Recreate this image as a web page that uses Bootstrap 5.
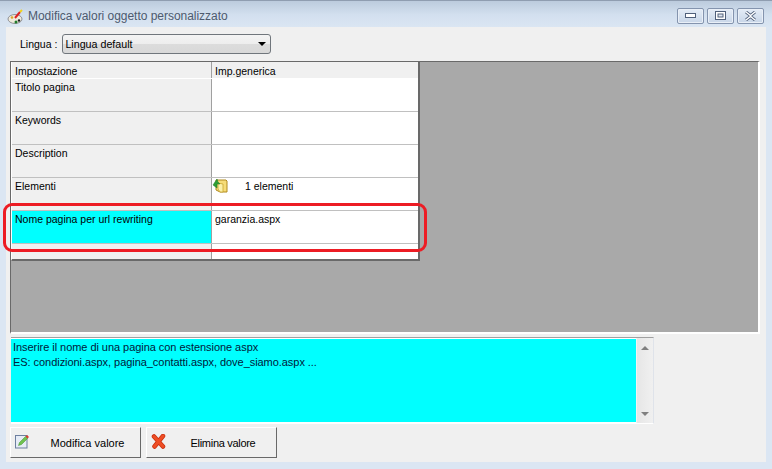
<!DOCTYPE html>
<html lang="it"><head><meta charset="utf-8"><title>Modifica valori oggetto personalizzato</title>
<link href="https://cdn.jsdelivr.net/npm/bootstrap@5.3.0/dist/css/bootstrap.min.css" rel="stylesheet">
<style>
html,body{margin:0;height:469px;overflow:hidden;background:#dbe6f3}
body{font-family:"Liberation Sans",Arial,sans-serif;font-size:10.5px;line-height:13px;color:#000}
.win{width:772px;height:469px;background:linear-gradient(#bccbdd 0,#d3e0ef 14px,#dbe6f3 27px);border-top:1px solid #8f9db0;padding:0 6px 7px 6px;position:relative}
.tbar{height:26px;padding-left:1px}
.tleft{margin-top:5px}
.ttext{font-size:12px;color:#4d5a6e;margin-left:4px;letter-spacing:-.03px}
.wbtns{gap:3px;margin-right:2px;margin-top:3px}
.wbtn{width:27px;height:16px;border:1px solid #8494ae;border-radius:2px;background:linear-gradient(#e4ecf6,#c8d6e8);box-shadow:inset 0 0 0 1px #e9eff7}
.client{height:435px;background:#f0f0f0;padding:0 0 0 4px}
.langrow{height:34px;padding-left:10px;gap:5px}
.lang{width:209px;height:20px;border:1px solid #70767c;border-radius:3px;background:linear-gradient(#f4f4f4 0,#ededed 50%,#dcdcdc 51%,#d8d8d8);padding:0 4px 0 2px;font-size:10.7px}
.caret{width:0;height:0;border-left:4px solid transparent;border-right:4px solid transparent;border-top:4px solid #000}
.gridwrap{width:747px;height:270px;background:#a9a9a9;border-top:1px solid #696969;border-left:1px solid #696969;border-right:2px solid #fff;border-bottom:2px solid #fff;box-sizing:content-box}
.tbl{width:409px;border-right:2px solid #696969;border-bottom:2px solid #696969;background:#fff;border-left:1px solid #fff}
.trow{display:flex;border-bottom:1px solid #c0c0c0;height:33px}
.trow.head{height:17px;background:#f0f0f0;border-bottom:1px solid #fff}
.trow.head .c1,.trow.head .c2{padding-top:3px}
.trow.last{height:15px;border-bottom:0}
.c1{width:200px;background:#f0f0f0;border-right:1px solid #a0a0a0;padding:2px 3px;flex:none}
.c2{flex:1;background:#fff;padding:2px 3px}
.head .c2{background:#f0f0f0}
.cy{background:#0ff}
.lower{margin-top:3px}
.memo{width:643px;height:87px;margin-left:1px;border:1px solid #fff;border-top:1px solid #a0a0a0;border-right:1px solid #dfe3ea;display:flex;background:#f3f3f3;border-left:0}
.memotext{flex:1;background:#0ff;color:#00203a;padding:1px 1px 1px 2px;line-height:15px;border-top:1px solid #fff;border-bottom:1px solid #fff;font-size:11px;letter-spacing:-.05px}
.sbar{width:16px;margin-left:1px;background:linear-gradient(90deg,#e6e6e6,#f0f0f0);padding:8px 0 7px}
.up{border-left:4px solid transparent;border-right:4px solid transparent;border-bottom:4px solid #808080;margin:0 auto;width:0}
.dn{border-left:4px solid transparent;border-right:4px solid transparent;border-top:4px solid #808080;margin:0 auto;width:0}
.bts{gap:5px;margin-top:3px}
.xbtn{width:131px;height:31px;background:#f0f0f0;border:1px solid;border-color:#fff #696969 #696969 #fff;padding:0 0 0 4px;font-size:11px}
.xbtn span{flex:1;text-align:center;padding-left:5px;padding-top:2px}
.xbtn svg{margin-top:-3px}
.xbtn span.tight{letter-spacing:-.3px;padding-left:4px}
.elem{margin-top:2px}
.redbox{position:absolute;left:3px;top:202px;width:424px;height:49px;border:3px solid #ed1c24;border-radius:9px}
</style></head><body>
<div class="win">
 <div class="tbar d-flex align-items-center justify-content-between">
  <div class="d-flex align-items-center tleft">
   <svg width="17" height="16" viewBox="0 0 17 16"><ellipse cx="8" cy="10" rx="7" ry="4.500" fill="#efeadb" stroke="#7a7a80" stroke-width=".8"/><circle cx="5" cy="8.500" r="1.300" fill="#d9a72a"/><circle cx="9" cy="13" r="1.500" fill="#1f7a2a"/><circle cx="12" cy="11.500" r="1.200" fill="#222"/><path d="M8 9 13 3" stroke="#d22" stroke-width="2"/><path d="M13 3 15 1" stroke="#f2d21a" stroke-width="2"/></svg>
   <span class="ttext">Modifica valori oggetto personalizzato</span>
  </div>
  <div class="d-flex wbtns">
   <div class="wbtn d-flex align-items-center justify-content-center"><svg width="11" height="6"><rect x=".5" y=".5" width="10" height="4" fill="#fff" stroke="#50607a"/></svg></div>
   <div class="wbtn d-flex align-items-center justify-content-center"><svg width="11" height="9"><rect x=".5" y=".5" width="10" height="8" fill="#fff" stroke="#50607a"/><rect x="3" y="3" width="5" height="3" fill="#dfe6f0" stroke="#50607a"/></svg></div>
   <div class="wbtn d-flex align-items-center justify-content-center"><svg width="13" height="10"><path d="M2 1l4.500 3.500L11 1M2 9l4.500-3.500L11 9" fill="none" stroke="#50607a" stroke-width="3"/><path d="M2 1l4.500 3.500L11 1M2 9l4.500-3.500L11 9" fill="none" stroke="#fff" stroke-width="1.400"/></svg></div>
  </div>
 </div>
 <div class="client">
  <div class="langrow d-flex align-items-center">
   <span>Lingua :</span>
   <div class="lang d-flex align-items-center justify-content-between"><span>Lingua default</span><i class="caret"></i></div>
  </div>
  <div class="gridwrap">
   <div class="tbl">
    <div class="trow head"><div class="c1">Impostazione</div><div class="c2">Imp.generica</div></div>
    <div class="trow"><div class="c1">Titolo pagina</div><div class="c2"></div></div>
    <div class="trow"><div class="c1">Keywords</div><div class="c2"></div></div>
    <div class="trow"><div class="c1">Description</div><div class="c2"></div></div>
    <div class="trow"><div class="c1">Elementi</div><div class="c2 d-flex align-items-start gap-3 ps-0 pt-0">
     <svg width="17" height="16" viewBox="0 0 17 16"><path d="M4 2h10l1 1v11H8L4 12z" fill="#f6dc78" stroke="#b08a1e"/><path d="M6 5l5 1v8H8L6 11z" fill="#fbf0a8" stroke="#c9a52e" stroke-width=".8"/><path d="M1 7l4-6 1 3 2 2-3 0 0 4z" fill="#2f9e35" stroke="#1c7a22" stroke-width=".5"/></svg>
     <span class="elem">1 elementi</span></div></div>
    <div class="trow"><div class="c1 cy">Nome pagina per url rewriting</div><div class="c2">garanzia.aspx</div></div>
    <div class="trow last"><div class="c1"></div><div class="c2"></div></div>
   </div>
  </div>
  <div class="lower">
   <div class="memo"><div class="memotext">Inserire il nome di una pagina con estensione aspx<br>ES: condizioni.aspx, pagina_contatti.aspx, dove_siamo.aspx ...</div>
    <div class="sbar d-flex flex-column justify-content-between"><div class="up"></div><div class="dn"></div></div></div>
   <div class="d-flex bts">
    <div class="xbtn d-flex align-items-center"><svg width="15" height="16" viewBox="0 0 15 16"><rect x=".5" y="2.500" width="11.500" height="12.500" fill="#e6ecf6" stroke="#6d7f9f"/><path d="M3.500 12.500l1-3 6-6 2 2-6 6z" fill="#6fc24f" stroke="#3f8f2c" stroke-width=".5"/><path d="M10.500 3.500l1.500-1.500 2 2-1.500 1.500z" fill="#d8402f"/></svg><span>Modifica valore</span></div>
    <div class="xbtn d-flex align-items-center"><svg width="15" height="15" viewBox="0 0 15 15"><path d="M3 2.500l9 10M12 2l-8.500 10.500" fill="none" stroke="#c93010" stroke-width="4.500" stroke-linecap="round"/><path d="M3 2.500l9 10M12 2l-8.500 10.500" fill="none" stroke="#ee4e25" stroke-width="3" stroke-linecap="round"/></svg><span class="tight">Elimina valore</span></div>
   </div>
  </div>
 </div>
 <div class="redbox"></div>
</div>
</body></html>
